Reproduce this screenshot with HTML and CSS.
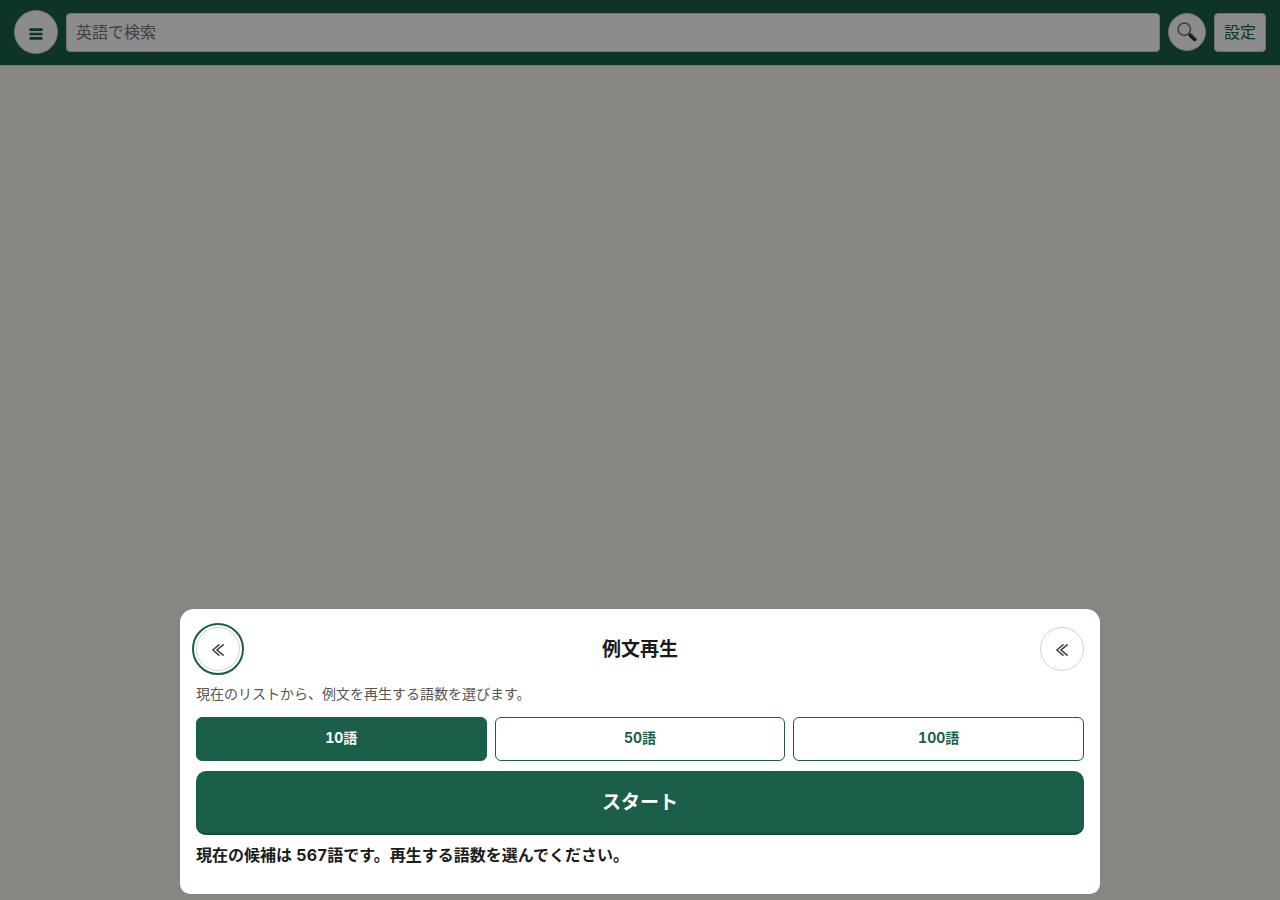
FILE: index.html
```html
<!DOCTYPE html>
<html lang="ja">
<head>
    <meta charset="UTF-8">
    <meta name="viewport" content="width=device-width, initial-scale=1.0">
    <title>例文再生</title>
    <link rel="stylesheet" href="styles.css">
</head>
<body>
    <header class="topbar">
        <button type="button" class="round-btn menu-btn" aria-label="メニュー">
            <svg width="14" height="12" viewBox="0 0 14 12"><path d="M.5 1.700h13M.5 6h13M.5 10.300h13" stroke="currentColor" stroke-width="2.700"/></svg>
        </button>
        <input type="search" class="search-input" placeholder="英語で検索" aria-label="英語で検索">
        <button type="button" class="round-btn search-btn" aria-label="検索">
            <svg width="20" height="20" viewBox="0 0 20 20" fill="none">
                <path d="M11.500 11.300l2.500 2.400" stroke="#666" stroke-width="2"/>
                <path d="M13.500 13.300l4.200 4" stroke="#2b2b2b" stroke-width="3.800" stroke-linecap="round"/>
                <path d="M13.800 12.600l4.200 4" stroke="#777" stroke-width=".8" stroke-linecap="round"/>
                <circle cx="7.300" cy="7.200" r="6.200" fill="#f4f8fa" stroke="#6b7278" stroke-width="1.500"/>
                <path d="M3.500 6.500a4 4 0 0 1 3.500-3" stroke="#fff" stroke-width="1"/>
            </svg>
        </button>
        <button type="button" class="settings-btn">設定</button>
    </header>

    <div class="overlay">
        <section class="sheet" role="dialog" aria-modal="true" aria-labelledby="sheetTitle">
            <div class="sheet-header">
                <button type="button" class="round-btn back-btn focused" aria-label="戻る">
                    <svg width="12" height="12" viewBox="0 0 12 12" fill="none"><path d="M7.500 .4L.8 6l6.700 5.600M11.700 .4L5 6l6.700 5.600" stroke="currentColor" stroke-width="1.600"/></svg>
                </button>
                <h2 id="sheetTitle">例文再生</h2>
                <button type="button" class="round-btn back-btn" aria-label="閉じる">
                    <svg width="12" height="12" viewBox="0 0 12 12" fill="none"><path d="M7.500 .4L.8 6l6.700 5.600M11.700 .4L5 6l6.700 5.600" stroke="currentColor" stroke-width="1.600"/></svg>
                </button>
            </div>
            <p class="description">現在のリストから、例文を再生する語数を選びます。</p>
            <div class="counts">
                <button type="button" class="count-btn active">10語</button>
                <button type="button" class="count-btn">50語</button>
                <button type="button" class="count-btn">100語</button>
            </div>
            <button type="button" class="start-btn">スタート</button>
            <p class="status">現在の候補は 567語です。再生する語数を選んでください。</p>
        </section>
    </div>
</body>
</html>
```
FILE: styles.css
```css
:root {
    --green: #1b5f4a;
    --green-dark: #144a39;
    --line: #d8d3ca;
    --text: #1c1c1c;
}
* {
    box-sizing: border-box;
}
body {
    margin: 0;
    min-height: 100vh;
    background: #f7f5ef;
    color: var(--text);
    font-family: Inter, "Noto Sans CJK JP", sans-serif;
    font-size: 16px;
    font-variant-numeric: tabular-nums;
}
button, input {
    font: inherit;
    font-variant-numeric: inherit;
}
button {
    cursor: pointer;
}

.topbar {
    display: flex;
    align-items: center;
    gap: 8px;
    padding: 10px 14px 11px;
    background: var(--green);
    border-bottom: 1px solid var(--line);
}
.round-btn {
    display: flex;
    align-items: center;
    justify-content: center;
    flex: none;
    width: 44px;
    height: 44px;
    padding: 2px 0 0;
    background: #fff;
    border: 1px solid var(--line);
    border-radius: 50%;
}
.menu-btn {
    padding-top: 4px;
    color: var(--green);
}
.search-btn {
    width: 38px;
    height: 38px;
    padding: 0;
}
.search-input {
    flex: 1;
    min-width: 0;
    height: 39px;
    padding: 0 9px;
    background: #fff;
    border: 1px solid var(--line);
    border-radius: 4px;
    appearance: none;
}
.search-input::placeholder {
    color: #757575;
}
.settings-btn {
    height: 39px;
    padding: 0 9px 2px;
    background: #fff;
    color: var(--green);
    border: 1px solid var(--line);
    border-radius: 4px;
}

.overlay {
    position: fixed;
    inset: 0;
    display: flex;
    align-items: flex-end;
    justify-content: center;
    padding: 6px;
    background: rgba(0, 0, 0, 0.45);
}
.sheet {
    width: 100%;
    max-width: 920px;
    padding: 18px 16px 27px;
    background: #fff;
    border-radius: 14px 14px 10px 10px;
}
.sheet-header {
    display: flex;
    align-items: center;
    justify-content: space-between;
}
.sheet-header h2 {
    margin: 0;
    padding-top: 2px;
    font-size: 19px;
    line-height: 28px;
}
.back-btn {
    color: #444;
}
.focused {
    outline: 2px solid var(--green);
    outline-offset: 2px;
}
.description {
    margin: 12px 0;
    color: #555;
    font-size: 14px;
    line-height: 22px;
}
.counts {
    display: grid;
    grid-template-columns: repeat(3, 1fr);
    gap: 8px;
}
.count-btn {
    height: 44px;
    padding: 0 6px 4px;
    background: #fff;
    color: var(--green);
    border: 1px solid var(--green);
    border-radius: 6px;
    font-size: 14px;
    font-weight: 700;
}
.count-btn.active {
    background: var(--green);
    color: #fff;
}
.start-btn {
    width: 100%;
    height: 64px;
    margin: 10px 0 8px;
    padding: 0 6px 6px;
    background: var(--green);
    color: #fff;
    border: none;
    border-radius: 10px;
    box-shadow: inset 0 -2px 0 var(--green-dark);
    font-size: 19px;
    font-weight: 700;
}
.status {
    margin: 0;
    font-weight: 700;
    line-height: 24px;
}
```
